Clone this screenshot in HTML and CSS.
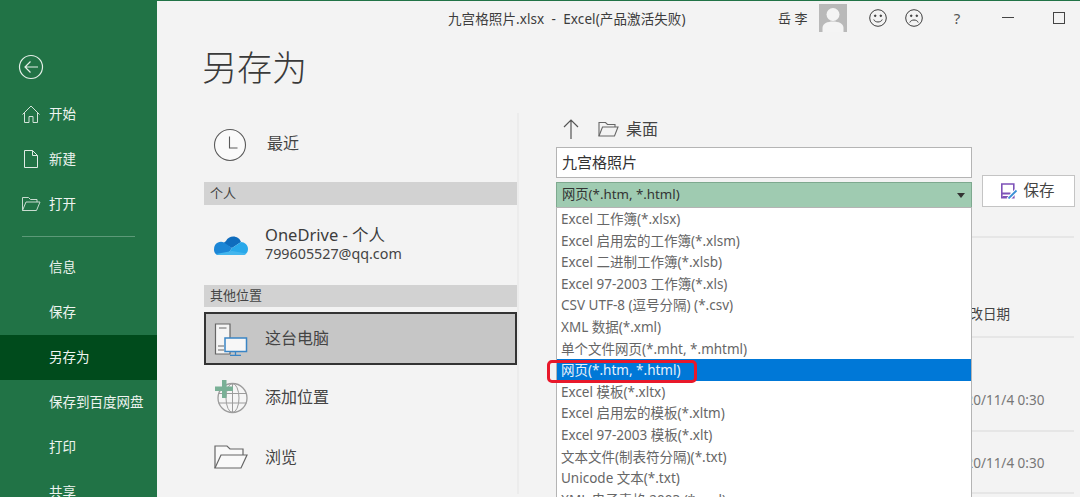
FILE: index.html
```html
<!DOCTYPE html>
<html lang="zh-CN">
<head>
<meta charset="utf-8">
<title>另存为</title>
<link rel="stylesheet" href="styles.css">
</head>
<body>
<div class="app">
  <aside class="side">
    <div class="back">
      <svg width="26" height="26" viewBox="0 0 26 26" fill="none" stroke="#e4efe8" stroke-width="1.2"><circle cx="13" cy="13" r="11.5"/><path d="M20 13H7M12.5 7.5 7 13l5.5 5.5"/></svg>
    </div>
    <nav class="nav">
      <a class="item"><svg class="ico" width="20" height="20" viewBox="0 0 20 20" fill="none" stroke="#d3e3d9" stroke-width="1"><path d="M1.500 10.500 10 2l8.500 8.500M3.500 9v9.500h4.500v-6h4v6h4.500V9"/></svg>开始</a>
      <a class="item"><svg class="ico" width="20" height="20" viewBox="0 0 20 20" fill="none" stroke="#e0ebe4" stroke-width="1"><path d="M3.500 1.500h8l5 5v12h-13zM11.500 1.500v5h5"/></svg>新建</a>
      <a class="item"><svg class="ico" width="20" height="20" viewBox="0 0 20 20" fill="none" stroke="#c9dcd0" stroke-width="1"><path d="M1.500 16.500v-13h6l2 2h6.500v2.500M1.500 16.500l3.500-8.500h14l-3.500 8.500z"/></svg>打开</a>
      <div class="rule"></div>
      <a class="item">信息</a>
      <a class="item">保存</a>
      <a class="item on">另存为</a>
      <a class="item">保存到百度网盘</a>
      <a class="item">打印</a>
      <a class="item">共享</a>
    </nav>
  </aside>

  <main class="main">
    <header class="titlebar">
      <div class="doc">九宫格照片.xlsx&nbsp; -&nbsp; Excel(产品激活失败)</div>
      <div class="user">岳 李</div>
      <div class="avatar">
        <svg width="28" height="28" viewBox="0 0 28 28"><rect width="28" height="28" fill="#b9b9b9"/><circle cx="14" cy="10.500" r="6.500" fill="#f4f4f4"/><path d="M3.500 28v-4c0-4.500 5-6.500 10.500-6.500S24.500 19.500 24.500 24v4z" fill="#f4f4f4"/></svg>
      </div>
      <div class="tools">
        <svg width="18" height="18" viewBox="0 0 18 18" fill="none" stroke="#3c3c3c" stroke-width="1"><circle cx="9" cy="9" r="8.300"/><circle cx="6.200" cy="6.800" r=".8" fill="#3c3c3c"/><circle cx="11.800" cy="6.800" r=".8" fill="#3c3c3c"/><path d="M4.800 10.500c1 3.300 7.400 3.300 8.400 0"/></svg>
        <svg width="18" height="18" viewBox="0 0 18 18" fill="none" stroke="#3c3c3c" stroke-width="1"><circle cx="9" cy="9" r="8.300"/><circle cx="6.200" cy="6.800" r=".8" fill="#3c3c3c"/><circle cx="11.800" cy="6.800" r=".8" fill="#3c3c3c"/><path d="M4.800 13.500c1-3.300 7.400-3.300 8.400 0"/></svg>
        <span class="help">?</span>
        <span class="min"></span>
        <span class="max"></span>
      </div>
    </header>

    <h1 class="heading">另存为</h1>

    <div class="columns">
      <section class="places">
        <div class="place recent">
          <svg width="34" height="34" viewBox="0 0 34 34" fill="#fafafa" stroke="#5a5a5a" stroke-width="1.100"><circle cx="17" cy="17" r="15.500"/><path d="M16.500 8.500v11.500h8" fill="none"/></svg>
          <span>最近</span>
        </div>
        <div class="group">个人</div>
        <div class="place drive">
          <svg width="34" height="22" viewBox="0 0 34 22"><path d="M12 7c2-4.500 8-6 12-3 1.500 1 2.500 2.500 3 4L18 14 9 9.500z" fill="#0f6cbd"/><path d="M4 8.500c2-1 4-1 6 0l8 5.500-5 7H5c-3 0-5-2-5-5.500C0 12 1.500 9.500 4 8.500z" fill="#1b86d6"/><path d="M27 8c3.500 0 7 3 7 7 0 3.500-2.500 6-5.500 6H13l5-7z" fill="#28a8ea"/><path d="M2 20c1 .7 2 1 3 1h23.500c1.500 0 3-.5 4-1.600L18 17z" fill="#43b6ee"/></svg>
          <div class="drive-text">
            <div class="drive-name">OneDrive - 个人</div>
            <div class="drive-mail">799605527@qq.com</div>
          </div>
        </div>
        <div class="group other">其他位置</div>
        <div class="place pc">
          <svg width="34" height="34" viewBox="0 0 34 34" fill="none"><path d="M1.500 2h14.500v30H1.500z" fill="#f5f5f5" stroke="#666" stroke-width="1.200"/><path d="M5 6h7.500M4 24h6M4 28h6" stroke="#666"/><rect x="11" y="16" width="21.500" height="13.500" fill="#f7f7f7" stroke="#3a85c5" stroke-width="1.500"/><path d="M21.500 29.500v3.500M16 33.300h11" stroke="#3a85c5" stroke-width="1.300"/></svg>
          <span>这台电脑</span>
        </div>
        <div class="place add">
          <svg width="34" height="34" viewBox="0 0 34 34" fill="none" stroke="#9c9c9c"><circle cx="18.500" cy="18" r="14.500" fill="#f5f5f5" stroke-width="1.300"/><ellipse cx="18.500" cy="18" rx="6.500" ry="14.500"/><path d="M18.500 3.500v29M4.500 13.500h28M4.500 23h28"/><path d="M8 0h4.500v6.500H19V11h-6.500v7H8v-7H1V6.500h7z" fill="#79b096" stroke="none"/></svg>
          <span>添加位置</span>
        </div>
        <div class="place browse">
          <svg width="34" height="26" viewBox="0 0 34 26" fill="#f9f9f9" stroke="#666" stroke-width="1.200"><path d="M1 24V2h12l3 3h13v6"/><path d="M1 24 7 11h26l-6 13z"/></svg>
          <span>浏览</span>
        </div>
      </section>

      <section class="picker">
        <div class="crumbs">
          <svg width="18" height="22" viewBox="0 0 18 22" fill="none" stroke="#555" stroke-width="1.200"><path d="M9 21V2M2 9l7-7 7 7"/></svg>
          <svg class="crumb-folder" width="21" height="16" viewBox="0 0 21 16" fill="none" stroke="#666" stroke-width="1.100"><path d="M1 15V1.500h6.500l2 2H17V6"/><path d="M1 15 4.500 6H20l-3.500 9z"/></svg>
          <span>桌面</span>
        </div>
        <div class="form">
          <div class="fields">
            <div class="name">九宫格照片</div>
            <div class="type">
              <span>网页(*.htm, *.html)</span>
              <i class="caret"></i>
            </div>
          </div>
          <button class="save">
            <svg width="18" height="16" viewBox="0 0 18 16" fill="none"><path d="M1.800 1h12v13.800h-12z" stroke="#7d52b8" stroke-width="1.600"/><path d="M2 10.500h8.500M2.500 14h8" stroke="#7d52b8" stroke-width="1.800"/><path d="M8 16.500 17 7" stroke="#fff" stroke-width="4"/><path d="M8.500 15.500 16.500 7.500" stroke="#3a8fd5" stroke-width="1.800"/></svg>
            <span>保存</span>
          </button>
        </div>
        <div class="files">
          <div class="file-head">修改日期</div>
          <div class="file first">2020/11/4 0:30</div>
          <div class="file second">2020/11/4 0:30</div>
        </div>

        <ul class="menu">
          <li>Excel 工作簿(*.xlsx)</li>
          <li>Excel 启用宏的工作簿(*.xlsm)</li>
          <li>Excel 二进制工作簿(*.xlsb)</li>
          <li>Excel 97-2003 工作簿(*.xls)</li>
          <li>CSV UTF-8 (逗号分隔) (*.csv)</li>
          <li>XML 数据(*.xml)</li>
          <li>单个文件网页(*.mht, *.mhtml)</li>
          <li class="sel">网页(*.htm, *.html)<b class="mark"></b></li>
          <li>Excel 模板(*.xltx)</li>
          <li>Excel 启用宏的模板(*.xltm)</li>
          <li>Excel 97-2003 模板(*.xlt)</li>
          <li>文本文件(制表符分隔)(*.txt)</li>
          <li>Unicode 文本(*.txt)</li>
          <li>XML 电子表格 2003 (*.xml)</li>
        </ul>
      </section>
    </div>
  </main>
</div>
</body>
</html>
```
FILE: styles.css
```css
* { box-sizing: border-box; }
html, body { margin: 0; height: 100%; overflow: hidden; }
body {
  font-family: "Noto Sans", "Noto Sans CJK SC", sans-serif;
  color: #444;
  background: #f3f3f3;
}
.app { display: flex; width: 1080px; height: 497px; overflow: hidden; border-top: 1px solid #217346; }
.side { width: 157px; flex: none; margin-top: -1px; background: #217346; color: #eef4f0; }
.back { height: 92px; padding: 54px 0 0 18px; }
.back svg { display: block; }
.nav { display: flex; flex-direction: column; }
.item { position: relative; height: 45px; padding-left: 49px; display: flex; align-items: center; font-size: 13.500px; line-height: 1; }
.item.on { background: #004b1c; }
.ico { position: absolute; left: 21px; top: 12px; }
.rule { height: 18px; padding-top: 9px; }
.rule::before { content: ""; display: block; margin: 0 22px; height: 1px; background: #5c9a78; }

.main { flex: 1; min-width: 0; }
.titlebar { height: 33px; display: flex; align-items: center; font-size: 13.500px; color: #3c3c3c; }
.doc { margin-left: 291px; width: 239px; white-space: nowrap; letter-spacing: .1px; }
.user { margin-left: 91px; width: 41px; font-size: 13px; }
.avatar { width: 28px; height: 28px; margin-top: 1px; }
.avatar svg { display: block; }
.tools { display: flex; align-items: center; margin-left: 22px; }
.tools svg { display: block; margin-right: 18px; }
.help { width: 12px; margin-left: 10px; font-size: 15px; text-align: center; color: #555; }
.min { width: 12px; height: 1px; background: #444; margin-left: 39px; }
.max { width: 12px; height: 12px; border: 1px solid #444; margin-left: 39px; }

.heading { margin: 10px 0 0 45px; height: 69px; font-size: 35px; font-weight: 300; line-height: 48px; color: #3a3a3a; }

.columns { display: flex; }
.places { width: 352px; margin-left: 47px; }
.place { display: flex; align-items: center; width: 313px; padding-left: 10px; font-size: 16px; color: #444; }
.place > span { margin-left: 17px; margin-top: -3px; }
.recent { height: 69px; align-items: flex-start; padding: 15px 0 0 9px; }
.recent > span { margin: 2px 0 0 20px; }
.group { width: 313px; height: 23px; padding-left: 6px; background: #d2d2d2; font-size: 13px; line-height: 22px; color: #444; }
.other { height: 22px; line-height: 21px; }
.drive { height: 80px; }
.drive-text { margin: -3px 0 0 17px; }
.drive-name { font-size: 16.500px; line-height: 21px; color: #3c3c3c; }
.drive-mail { font-size: 14.300px; line-height: 18px; color: #444; }
.pc { height: 53px; margin-top: 5px; padding-left: 8px; background: #c6c6c6; border: 2px solid #333; }
.pc > span { margin-left: 17px; }
.add { height: 60px; margin-top: 2px; }
.browse { height: 60px; }

.picker { position: relative; flex: 1; min-width: 0; }
.picker::before { content: ""; position: absolute; left: -39px; top: 0; bottom: 0; width: 2px; background: #ececec; }
.crumbs { display: flex; align-items: center; height: 34px; padding: 0 0 4px 6px; font-size: 16px; color: #444; }
.crumbs svg { margin-top: 2px; }
.crumb-folder { margin-left: 18px; }
.crumbs span { margin-left: 7px; }
.form { display: flex; align-items: flex-start; }
.fields { width: 416px; flex: none; }
.name { height: 31px; padding-left: 5px; background: #fff; border: 1px solid #b4b4b4; font-size: 15px; line-height: 29px; color: #333; }
.type { display: flex; align-items: center; justify-content: space-between; height: 26px; margin-top: 4px; padding: 0 6px 3px 5px; background: #9fcbb1; border: 1px solid #7ea98f; font-size: 13.300px; color: #333; }
.caret { width: 0; height: 0; margin-top: 3px; border: 4px solid transparent; border-top: 5px solid #333; border-bottom: 0; }
.save { display: flex; align-items: center; justify-content: center; gap: 5px; width: 93px; height: 32px; margin: 28px 0 0 10px; padding: 0 2px 0 0; background: #fff; border: 1px solid #c4c4c4; font: inherit; font-size: 15.500px; color: #444; }
.save svg { overflow: hidden; }
.save span { margin-top: -4px; }

.files { margin: 28px 6px 0 0; padding-left: 394px; font-size: 13.500px; line-height: 20px; color: #777; }
.file-head { height: 102px; padding: 66px 0 0 6px; border-top: 2px solid #e6e6e6; border-bottom: 2px solid #e6e6e6; color: #444; }
.file { border-bottom: 2px solid #e6e6e6; white-space: nowrap; }
.first { height: 94px; padding-top: 52px; }
.second { height: 62px; padding-top: 21px; }

.menu { position: absolute; left: 0; top: 94px; width: 416px; height: 300px; margin: 0; padding: 0; list-style: none; background: #fff; border: 1px solid #b4b4b4; font-size: 13.500px; color: #666; }
.menu li { position: relative; height: 21.600px; padding-left: 4px; line-height: 23.600px; white-space: nowrap; }
.menu li.sel { background: #0078d7; color: #e8f2fb; }
.mark { position: absolute; left: -10px; top: 1px; width: 150px; height: 23px; border: 3px solid #e8182a; border-radius: 5px; }
```
